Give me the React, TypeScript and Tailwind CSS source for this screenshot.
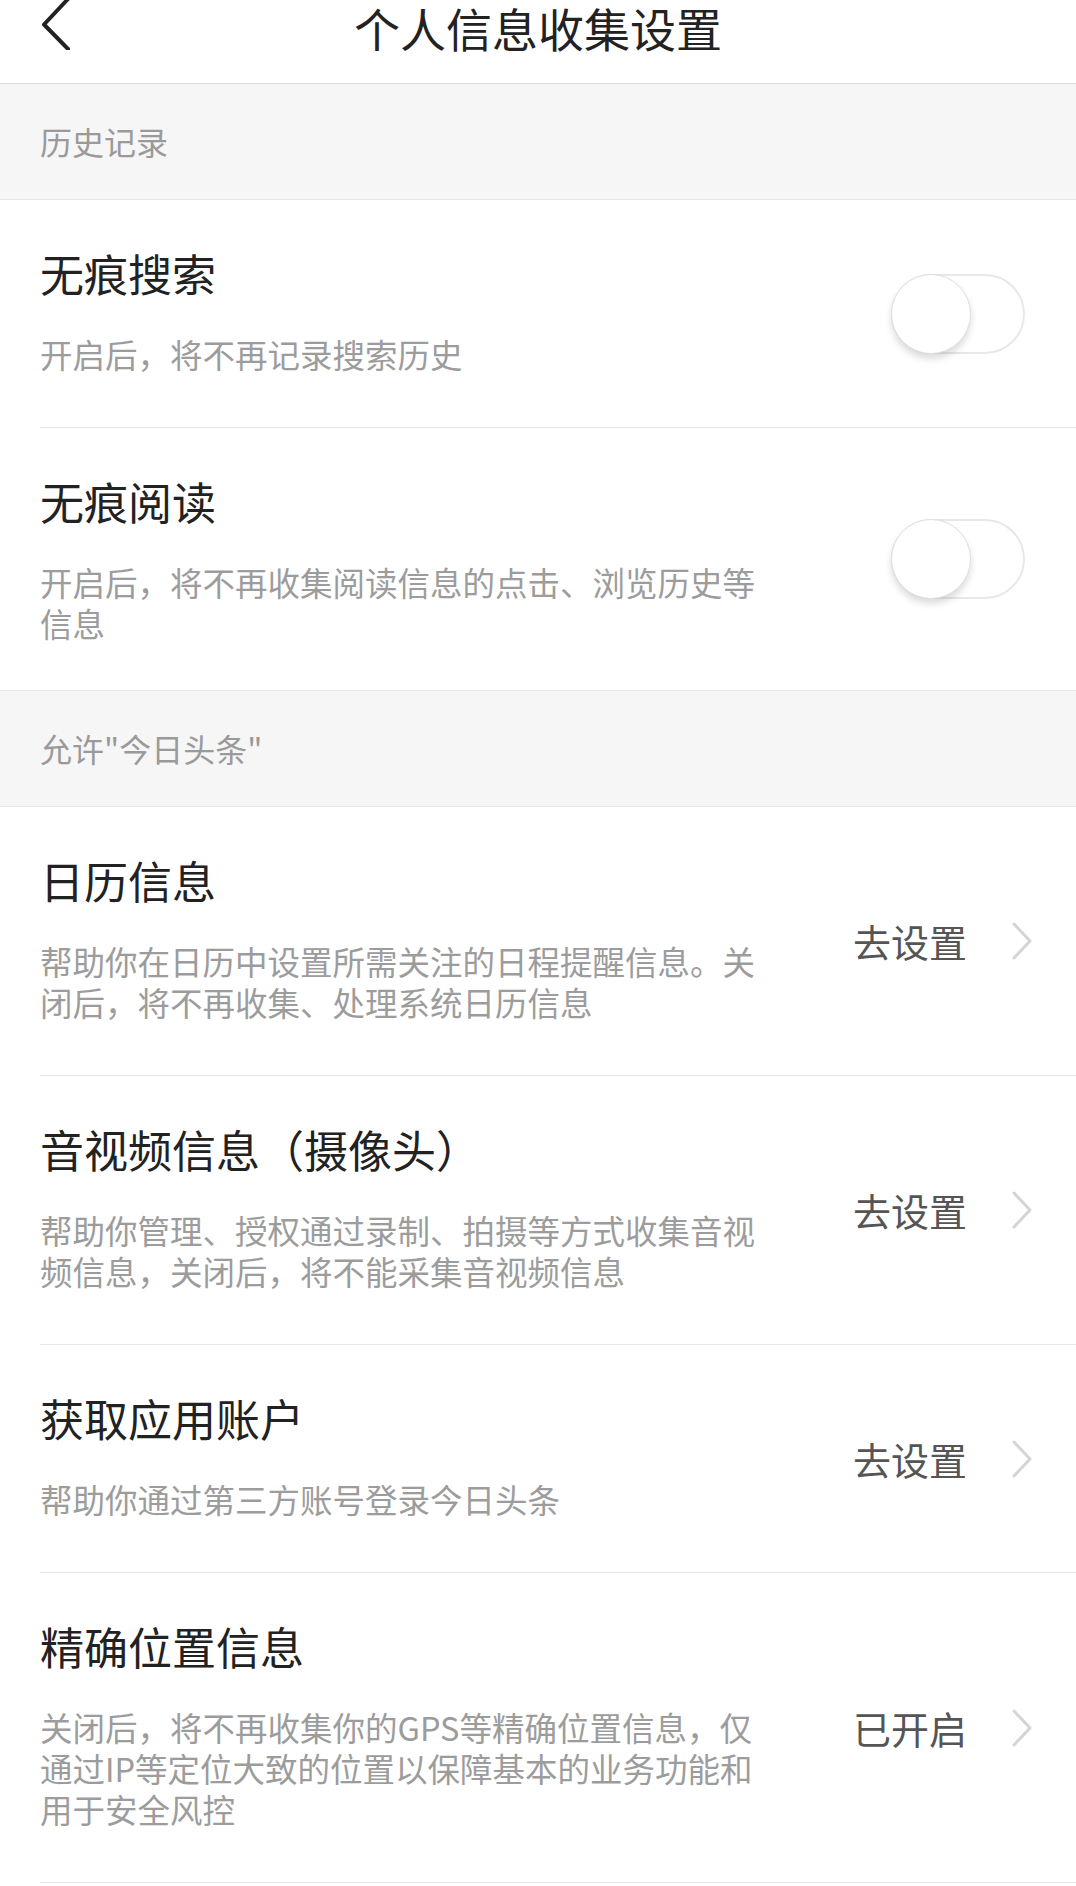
import React from "react";

const FONT = { fontFamily: '"Noto Sans CJK SC", "Noto Sans", sans-serif' };

function Chevron() {
  return (
    <svg width="22" height="40" viewBox="0 0 22 40" fill="none">
      <polyline points="3,3 19,20 3,37" stroke="#d4d4d4" strokeWidth="3" strokeLinecap="round" strokeLinejoin="round" />
    </svg>
  );
}

function Toggle() {
  return (
    <div className="relative w-[134px] h-[80px] rounded-full border-2 border-[#e8e8e8] bg-white">
      <div className="absolute left-[-2px] top-[-2px] w-[80px] h-[80px] rounded-full bg-white border border-[#e0e0e0] shadow-[0_5px_7px_rgba(0,0,0,0.14)]" />
    </div>
  );
}

function Section({ label }: { label: string }) {
  return (
    <div className="flex items-center h-[116px] bg-[#f6f6f6] border-b border-[#e6e6e6] pl-[40px] text-[32px] leading-[41px] text-[#9a9a9a]">
      {label}
    </div>
  );
}

function Row({
  title,
  desc,
  right,
  divider = true,
  pb = "pb-[53px]",
}: {
  title: string;
  desc: string;
  right: React.ReactNode;
  divider?: boolean;
  pb?: string;
}) {
  return (
    <div className="pl-[40px] bg-white">
      <div className={`flex items-center justify-between ${divider ? "border-b border-[#e6e6e6]" : ""}`}>
        <div className={`pt-[43px] ${pb}`}>
          <div className="text-[44px] leading-[60px] text-[#222222]">{title}</div>
          <div className="mt-[30px] w-[728px] text-[32.5px] leading-[41px] text-[#9c9c9c]">{desc}</div>
        </div>
        {right}
      </div>
    </div>
  );
}

function GoSet({ text }: { text: string }) {
  return (
    <div className="flex items-center gap-[44px] pr-[43px]">
      <span className="text-[38px] leading-[50px] text-[#555555]">{text}</span>
      <Chevron />
    </div>
  );
}

export default function App() {
  return (
    <div className="w-[1076px] min-h-[1886px] bg-white" style={FONT}>
      <div className="relative h-[84px] border-b border-[#dcdcdc] bg-white flex justify-center">
        <div className="absolute left-[40px] top-0">
          <svg width="32" height="50" viewBox="0 0 32 50" fill="none">
            <polyline points="28,-1 4,24.5 28,49" stroke="#222222" strokeWidth="4" strokeLinecap="round" strokeLinejoin="round" />
          </svg>
        </div>
        <div className="text-[46px] leading-[54px] text-[#222222]">个人信息收集设置</div>
      </div>

      <Section label="历史记录" />
      <Row
        title="无痕搜索"
        desc="开启后，将不再记录搜索历史"
        right={<div className="pr-[51px]"><Toggle /></div>}
      />
      <Row
        title="无痕阅读"
        desc="开启后，将不再收集阅读信息的点击、浏览历史等信息"
        right={<div className="pr-[51px]"><Toggle /></div>}
        divider={false}
        pb="pb-[47px]"
      />
      <div className="border-t border-[#e6e6e6]" />
      <Section label={'允许"今日头条"'} />
      <Row
        title="日历信息"
        desc="帮助你在日历中设置所需关注的日程提醒信息。关闭后，将不再收集、处理系统日历信息"
        right={<GoSet text="去设置" />}
      />
      <Row
        title="音视频信息（摄像头）"
        desc="帮助你管理、授权通过录制、拍摄等方式收集音视频信息，关闭后，将不能采集音视频信息"
        right={<GoSet text="去设置" />}
      />
      <Row
        title="获取应用账户"
        desc="帮助你通过第三方账号登录今日头条"
        right={<GoSet text="去设置" />}
      />
      <Row
        title="精确位置信息"
        desc="关闭后，将不再收集你的GPS等精确位置信息，仅通过IP等定位大致的位置以保障基本的业务功能和用于安全风控"
        right={<GoSet text="已开启" />}
      />
    </div>
  );
}
